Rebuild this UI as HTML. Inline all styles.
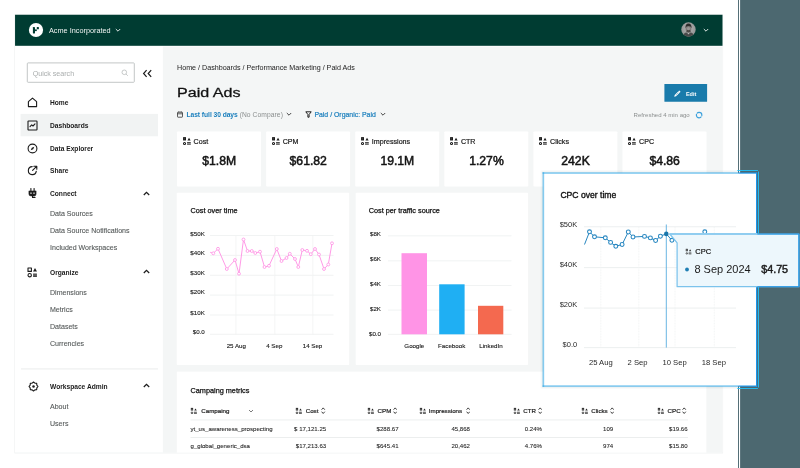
<!DOCTYPE html>
<html>
<head>
<meta charset="utf-8">
<title>Paid Ads</title>
<style>
*{box-sizing:border-box;margin:0;padding:0}
html,body{width:800px;height:468px;overflow:hidden;background:#fff}
body{font-family:"Liberation Sans",sans-serif;color:#1b1b1b;position:relative}
.abs{position:absolute}
.t{position:absolute;white-space:nowrap;line-height:10px;height:10px;font-size:7px}
.b{font-weight:bold}
.card{position:absolute;background:#fff;border-radius:1px}
.nav{font-size:6.65px;font-weight:bold;color:#1b1b1b}
.sub{font-size:7.05px;color:#555959;-webkit-text-stroke:0.1px #555959}
.kl{font-size:7.12px;color:#1b1b1b;-webkit-text-stroke:0.2px #1b1b1b}
.kv{font-size:12.2px;font-weight:normal;-webkit-text-stroke:0.5px #141414;text-align:center;line-height:14px;height:14px;color:#141414}
.ax{font-size:6.2px;color:#1b1b1b;-webkit-text-stroke:0.12px #1b1b1b}
.th{font-size:6.2px;color:#1b1b1b;-webkit-text-stroke:0.2px #1b1b1b}
.td{font-size:6.08px;color:#1f1f1f;-webkit-text-stroke:0.08px #1f1f1f}
.r{text-align:right}
</style>
</head>
<body><div id="root" style="position:absolute;left:0;top:0;width:800px;height:468px;will-change:transform">
<svg class="abs" style="left:0;top:0" width="800" height="468" viewBox="0 0 800 468"><rect x="740.1" y="0" width="59.9" height="468" fill="#4c6870" /><rect x="738.05" y="0" width="0.95" height="468" fill="#4c6870" /><rect x="14.4" y="14.4" width="708.7" height="439.0" fill="#eef1f1" /><rect x="15.05" y="14.75" width="707.45" height="437.85" fill="#fff" /><rect x="162.9" y="46.6" width="559.5" height="406.0" fill="#f4f6f6" /><rect x="15.05" y="14.75" width="707.45" height="31.05" fill="#003c32" /><rect x="27.3" y="62.9" width="107.0" height="19.4" fill="#fff" stroke="#b4b9b9" stroke-width="0.8" rx="0.8"/><rect x="20.6" y="113.9" width="137.4" height="22.4" fill="#f1f3f3" /><rect x="21" y="368.2" width="137" height="1.4" fill="#f0f2f2" /><rect x="664.4" y="84.1" width="42.7" height="17.7" fill="#197bab" rx="0.5"/><rect x="177.0" y="131.4" width="84.0" height="55.2" fill="#fff" rx="0.8"/><rect x="266.1" y="131.4" width="84.0" height="55.2" fill="#fff" rx="0.8"/><rect x="355.2" y="131.4" width="84.0" height="55.2" fill="#fff" rx="0.8"/><rect x="444.3" y="131.4" width="84.0" height="55.2" fill="#fff" rx="0.8"/><rect x="533.4" y="131.4" width="84.0" height="55.2" fill="#fff" rx="0.8"/><rect x="622.5" y="131.4" width="84.0" height="55.2" fill="#fff" rx="0.8"/><rect x="176.75" y="192.8" width="172.45" height="172.3" fill="#fff" rx="0.8"/><rect x="355.7" y="192.8" width="172.4" height="172.3" fill="#fff" rx="0.8"/><rect x="176.8" y="371.6" width="529.6" height="81.0" fill="#fff" /><rect x="190.5" y="419.5" width="497.5" height="0.9" fill="#eaeded" /><rect x="190.5" y="437.1" width="497.5" height="0.9" fill="#eaeded" /></svg>
<svg class="abs" style="left:28px;top:22px" width="16" height="16" viewBox="0 0 16 16">
<circle cx="8" cy="8" r="7.1" fill="#fff"/>
<rect x="4.9" y="5" width="2.1" height="6.4" rx="0.4" fill="#003c32"/>
<rect x="7" y="7.4" width="1.8" height="1.7" fill="#003c32"/>
<rect x="8.8" y="5" width="2.1" height="2.2" rx="0.5" fill="#003c32"/>
</svg>
<div class="t" style="left:49px;top:25.8px;font-size:7.3px;color:#eef3f1">Acme Incorporated</div>
<svg class="abs" style="left:115px;top:28.1px" width="6" height="5" viewBox="0 0 6 5"><path d="M0.8 1 L3 3.2 L5.2 1" fill="none" stroke="#e4ebe9" stroke-width="0.95"/></svg>
<svg class="abs" style="left:681.4px;top:22.3px" width="15" height="15" viewBox="0 0 15 15">
<defs><clipPath id="av"><circle cx="7.5" cy="7.5" r="7.2"/></clipPath>
<radialGradient id="avg" cx="0.5" cy="0.45" r="0.6"><stop offset="0" stop-color="#b5b5b5"/><stop offset="1" stop-color="#8e8e8e"/></radialGradient></defs>
<g clip-path="url(#av)">
<rect width="15" height="15" fill="url(#avg)"/>
<path d="M1.5 15 Q2.5 10.8 5.6 10.6 L7.5 12 L9.4 10.6 Q12.5 10.8 13.5 15 Z" fill="#4a4a4a"/>
<path d="M6.3 10.4 L7.5 12.6 L8.7 10.4 Z" fill="#bdbdbd"/>
<ellipse cx="7.5" cy="6.6" rx="2.9" ry="3.9" fill="#7d7a78"/>
<path d="M4.5 6.2 Q4.2 1.6 7.5 1.6 Q10.8 1.6 10.5 6.2 Q10 3.9 7.5 3.9 Q5 3.9 4.5 6.2Z" fill="#2e2c2b"/>
<ellipse cx="7.5" cy="9.2" rx="1.9" ry="1.4" fill="#4d4946"/>
<ellipse cx="7.5" cy="6.6" rx="1.6" ry="1.6" fill="#9a9694"/>
</g></svg>
<svg class="abs" style="left:702.6px;top:27.9px" width="6" height="5" viewBox="0 0 6 5"><path d="M0.8 1 L3 3.2 L5.2 1" fill="none" stroke="#e4ebe9" stroke-width="0.95"/></svg>
<div class="t" style="left:32.7px;top:68.7px;font-size:7.1px;color:#a9adad">Quick search</div>
<svg class="abs" style="left:121px;top:68.8px" width="8" height="8" viewBox="0 0 8 8"><circle cx="3.3" cy="3.3" r="2.3" fill="none" stroke="#b0b4b4" stroke-width="0.7"/><path d="M5 5 L6.8 6.8" stroke="#b0b4b4" stroke-width="0.7"/></svg>
<svg class="abs" style="left:142px;top:68.5px" width="11" height="9" viewBox="0 0 11 9"><path d="M4.6 1.2 L1.6 4.5 L4.6 7.8 M9.2 1.2 L6.2 4.5 L9.2 7.8" fill="none" stroke="#1b1b1b" stroke-width="1.2"/></svg>
<div class="t nav" style="left:50px;top:98px">Home</div>
<div class="t nav" style="left:50px;top:120.5px">Dashboards</div>
<div class="t nav" style="left:50px;top:143.6px">Data Explorer</div>
<div class="t nav" style="left:50px;top:165.5px">Share</div>
<div class="t nav" style="left:50px;top:188.8px">Connect</div>
<svg class="abs" style="left:142.5px;top:190.60000000000002px" width="7" height="5" viewBox="0 0 7 5"><path d="M0.8 4 L3.5 1.3 L6.2 4" fill="none" stroke="#1b1b1b" stroke-width="1.25"/></svg>
<div class="t sub" style="left:50px;top:208.8px">Data Sources</div>
<div class="t sub" style="left:50px;top:225.8px">Data Source Notifications</div>
<div class="t sub" style="left:50px;top:242.8px">Included Workspaces</div>
<div class="t nav" style="left:50px;top:267.6px">Organize</div>
<svg class="abs" style="left:142.5px;top:269.40000000000003px" width="7" height="5" viewBox="0 0 7 5"><path d="M0.8 4 L3.5 1.3 L6.2 4" fill="none" stroke="#1b1b1b" stroke-width="1.25"/></svg>
<div class="t sub" style="left:50px;top:287.5px">Dimensions</div>
<div class="t sub" style="left:50px;top:304.5px">Metrics</div>
<div class="t sub" style="left:50px;top:321.5px">Datasets</div>
<div class="t sub" style="left:50px;top:339px">Currencies</div>
<div class="t nav" style="left:50px;top:381.5px">Workspace Admin</div>
<svg class="abs" style="left:142.5px;top:383.3px" width="7" height="5" viewBox="0 0 7 5"><path d="M0.8 4 L3.5 1.3 L6.2 4" fill="none" stroke="#1b1b1b" stroke-width="1.25"/></svg>
<div class="t sub" style="left:50px;top:401.5px">About</div>
<div class="t sub" style="left:50px;top:418.5px">Users</div>
<svg class="abs" style="left:26.5px;top:97px" width="11" height="11" viewBox="0 0 11 11"><path d="M1.4 4.6 L5.5 1.1 L9.6 4.6 L9.6 9.6 L1.4 9.6 Z" fill="none" stroke="#1b1b1b" stroke-width="1.1" stroke-linejoin="round" stroke-linecap="round"/></svg>
<svg class="abs" style="left:26.5px;top:120px" width="11" height="11" viewBox="0 0 11 11"><rect x="1" y="1" width="9" height="9" rx="0.6" fill="none" stroke="#1b1b1b" stroke-width="1.1" stroke-linejoin="round" stroke-linecap="round"/><path d="M3 6.7 L4.7 4.9 L6 6 L8 3.9" fill="none" stroke="#1b1b1b" stroke-width="1.1" stroke-linejoin="round" stroke-linecap="round" /></svg>
<svg class="abs" style="left:26.5px;top:142.5px" width="11" height="11" viewBox="0 0 11 11"><circle cx="5.5" cy="5.5" r="4.4" fill="none" stroke="#1b1b1b" stroke-width="1.1" stroke-linejoin="round" stroke-linecap="round"/><path d="M7.3 3.7 L6.2 6.2 L3.7 7.3 L4.8 4.8 Z" fill="#1b1b1b"/></svg>
<svg class="abs" style="left:26.5px;top:165px" width="11" height="11" viewBox="0 0 11 11"><path d="M5.2 1.6 A4 4 0 1 0 9.3 6.2" fill="none" stroke="#1b1b1b" stroke-width="1.1" stroke-linejoin="round" stroke-linecap="round"/><path d="M5.6 5.4 L9.6 1.4 M6.8 1.2 L9.8 1.2 L9.8 4.2" fill="none" stroke="#1b1b1b" stroke-width="1.1" stroke-linejoin="round" stroke-linecap="round"/></svg>
<svg class="abs" style="left:27.4px;top:187.5px" width="11" height="12" viewBox="0 0 11 12"><path d="M3.9 0.5 V2.8 M7.1 0.5 V2.8" fill="none" stroke="#1b1b1b" stroke-width="1.1" stroke-linejoin="round" stroke-linecap="round"/><path d="M1.9 2.9 H9.1 V6 Q9.1 7.9 7.2 7.9 H3.8 Q1.9 7.9 1.9 6 Z" fill="#1b1b1b" stroke="#1b1b1b" stroke-width="0.5"/><rect x="3.1" y="4.5" width="1.8" height="1.2" rx="0.4" fill="#ddd"/><rect x="6.1" y="4.5" width="1.8" height="1.2" rx="0.4" fill="#ddd"/><path d="M5.5 8 V9.4 H8" fill="none" stroke="#1b1b1b" stroke-width="1.1" stroke-linejoin="round" stroke-linecap="round"/></svg>
<svg class="abs" style="left:27.1px;top:267.2px" width="11" height="11" viewBox="0 0 11 11"><rect x="1" y="1" width="3.4" height="3.4" fill="none" stroke="#1b1b1b" stroke-width="1.1" stroke-linejoin="round" stroke-linecap="round"/><path d="M8 1 L10 4.4 L6 4.4 Z" fill="#1b1b1b"/><circle cx="2.7" cy="8.2" r="1.7" fill="none" stroke="#1b1b1b" stroke-width="1.1" stroke-linejoin="round" stroke-linecap="round"/><rect x="6.1" y="6.6" width="3.8" height="3.3" fill="#1b1b1b"/><path d="M6.1 7.7 H9.9 M6.1 8.8 H9.9" stroke="#fff" stroke-width="0.35"/></svg>
<svg class="abs" style="left:27.6px;top:380.8px" width="11" height="11" viewBox="0 0 11 11"><path d="M5.50 1.00 L6.88 2.17 L8.68 2.32 L8.83 4.12 L10.00 5.50 L8.83 6.88 L8.68 8.68 L6.88 8.83 L5.50 10.00 L4.12 8.83 L2.32 8.68 L2.17 6.88 L1.00 5.50 L2.17 4.12 L2.32 2.32 L4.12 2.17 Z" fill="none" stroke="#1b1b1b" stroke-width="1.1" stroke-linejoin="round" stroke-linecap="round"/><circle cx="5.5" cy="5.5" r="1.25" fill="#1b1b1b"/></svg>
<div class="t" style="left:177px;top:62.5px;font-size:7.15px;color:#222">Home / Dashboards / Performance Marketing / Paid Ads</div>
<div class="t" style="left:176.8px;top:82.8px;font-size:13.7px;line-height:20px;height:20px;color:#111;-webkit-text-stroke:0.3px #111;transform:scaleX(1.175);transform-origin:0 50%">Paid Ads</div>
<svg class="abs" style="left:177px;top:111px" width="6" height="7" viewBox="0 0 6 7"><rect x="0.5" y="1.2" width="5" height="5" rx="0.5" fill="none" stroke="#333" stroke-width="0.8"/><path d="M0.5 2.8 H5.5" stroke="#333" stroke-width="0.8"/><path d="M1.8 0.3 V1.6 M4.2 0.3 V1.6" stroke="#333" stroke-width="0.7"/></svg>
<div class="t" style="left:186.5px;top:110px;font-size:6.7px"><span style="color:#1a7fbd;font-weight:bold;letter-spacing:-0.05px">Last full 30 days</span><span style="color:#8a8e8e;letter-spacing:0.08px"> (No Compare)</span></div>
<svg class="abs" style="left:285.5px;top:112.3px" width="6" height="5" viewBox="0 0 6 5"><path d="M0.8 1 L3 3.2 L5.2 1" fill="none" stroke="#333" stroke-width="0.9"/></svg>
<svg class="abs" style="left:304.5px;top:111px" width="7" height="7" viewBox="0 0 7 7"><path d="M0.8 0.8 H6.2 L4.1 3.5 V6.2 H2.9 V3.5 Z" fill="none" stroke="#222" stroke-width="1" stroke-linejoin="round"/></svg>
<div class="t" style="left:314.4px;top:110px;font-size:6.92px;color:#1a7fbd;-webkit-text-stroke:0.2px #1a7fbd">Paid / Organic: Paid</div>
<svg class="abs" style="left:380.3px;top:112.3px" width="6" height="5" viewBox="0 0 6 5"><path d="M0.8 1 L3 3.2 L5.2 1" fill="none" stroke="#333" stroke-width="0.9"/></svg>
<svg class="abs" style="left:673px;top:89px" width="9" height="9" viewBox="0 0 9 9"><path d="M1.2 7.8 L1.7 5.9 L6.2 1.4 L7.6 2.8 L3.1 7.3 Z" fill="#fff"/><path d="M5.2 2.5 L6.5 3.8 M3.9 3.8 L5.2 5.1 M2.7 5 L4 6.3" stroke="#197bab" stroke-width="0.45"/></svg>
<div class="t b" style="left:685.9px;top:89px;font-size:5.5px;color:#fff">Edit</div>
<div class="t" style="left:633.6px;top:110px;font-size:6.05px;color:#8b8f8f">Refreshed 4 min ago</div>
<svg class="abs" style="left:694.5px;top:110.5px" width="8" height="8" viewBox="0 0 8 8"><circle cx="4.1" cy="4.1" r="2.75" fill="none" stroke="#3aa0dc" stroke-width="1.15" stroke-dasharray="8.04 0.6" stroke-dashoffset="-1.5"/></svg>
<svg class="abs" style="left:181.5px;top:135.8px" width="9.9" height="9.9" viewBox="0 0 9 9"><rect x="1.45" y="1.5" width="1.7" height="2.1" fill="none" stroke="#1b1b1b" stroke-width="0.95"/><path d="M6.4 1.7 L7.85 4.1 L4.95 4.1 Z" fill="#1b1b1b"/><circle cx="2.3" cy="6.8" r="0.95" fill="none" stroke="#1b1b1b" stroke-width="0.95"/><path d="M4.6 6.1 H8 M4.6 7.4 H8" stroke="#1b1b1b" stroke-width="0.9"/></svg>
<div class="t kl" style="left:193.6px;top:137px">Cost</div>
<div class="t kv" style="left:177.0px;width:84.3px;top:154px">$1.8M</div>
<svg class="abs" style="left:270.6px;top:135.8px" width="9.9" height="9.9" viewBox="0 0 9 9"><rect x="1.45" y="1.5" width="1.7" height="2.1" fill="none" stroke="#1b1b1b" stroke-width="0.95"/><path d="M6.4 1.7 L7.85 4.1 L4.95 4.1 Z" fill="#1b1b1b"/><circle cx="2.3" cy="6.8" r="0.95" fill="none" stroke="#1b1b1b" stroke-width="0.95"/><path d="M4.6 6.1 H8 M4.6 7.4 H8" stroke="#1b1b1b" stroke-width="0.9"/></svg>
<div class="t kl" style="left:282.70000000000005px;top:137px">CPM</div>
<div class="t kv" style="left:266.1px;width:84.3px;top:154px">$61.82</div>
<svg class="abs" style="left:359.7px;top:135.8px" width="9.9" height="9.9" viewBox="0 0 9 9"><rect x="1.45" y="1.5" width="1.7" height="2.1" fill="none" stroke="#1b1b1b" stroke-width="0.95"/><path d="M6.4 1.7 L7.85 4.1 L4.95 4.1 Z" fill="#1b1b1b"/><circle cx="2.3" cy="6.8" r="0.95" fill="none" stroke="#1b1b1b" stroke-width="0.95"/><path d="M4.6 6.1 H8 M4.6 7.4 H8" stroke="#1b1b1b" stroke-width="0.9"/></svg>
<div class="t kl" style="left:371.8px;top:137px">Impressions</div>
<div class="t kv" style="left:355.2px;width:84.3px;top:154px">19.1M</div>
<svg class="abs" style="left:448.8px;top:135.8px" width="9.9" height="9.9" viewBox="0 0 9 9"><rect x="1.45" y="1.5" width="1.7" height="2.1" fill="none" stroke="#1b1b1b" stroke-width="0.95"/><path d="M6.4 1.7 L7.85 4.1 L4.95 4.1 Z" fill="#1b1b1b"/><circle cx="2.3" cy="6.8" r="0.95" fill="none" stroke="#1b1b1b" stroke-width="0.95"/><path d="M4.6 6.1 H8 M4.6 7.4 H8" stroke="#1b1b1b" stroke-width="0.9"/></svg>
<div class="t kl" style="left:460.90000000000003px;top:137px">CTR</div>
<div class="t kv" style="left:444.3px;width:84.3px;top:154px">1.27%</div>
<svg class="abs" style="left:537.9px;top:135.8px" width="9.9" height="9.9" viewBox="0 0 9 9"><rect x="1.45" y="1.5" width="1.7" height="2.1" fill="none" stroke="#1b1b1b" stroke-width="0.95"/><path d="M6.4 1.7 L7.85 4.1 L4.95 4.1 Z" fill="#1b1b1b"/><circle cx="2.3" cy="6.8" r="0.95" fill="none" stroke="#1b1b1b" stroke-width="0.95"/><path d="M4.6 6.1 H8 M4.6 7.4 H8" stroke="#1b1b1b" stroke-width="0.9"/></svg>
<div class="t kl" style="left:550.0px;top:137px">Clicks</div>
<div class="t kv" style="left:533.4px;width:84.3px;top:154px">242K</div>
<svg class="abs" style="left:627.0px;top:135.8px" width="9.9" height="9.9" viewBox="0 0 9 9"><rect x="1.45" y="1.5" width="1.7" height="2.1" fill="none" stroke="#1b1b1b" stroke-width="0.95"/><path d="M6.4 1.7 L7.85 4.1 L4.95 4.1 Z" fill="#1b1b1b"/><circle cx="2.3" cy="6.8" r="0.95" fill="none" stroke="#1b1b1b" stroke-width="0.95"/><path d="M4.6 6.1 H8 M4.6 7.4 H8" stroke="#1b1b1b" stroke-width="0.9"/></svg>
<div class="t kl" style="left:639.1px;top:137px">CPC</div>
<div class="t kv" style="left:622.5px;width:84.3px;top:154px">$4.86</div>
<div class="t" style="left:190.5px;top:205.5px;font-size:7.3px;color:#111;-webkit-text-stroke:0.25px #111">Cost over time</div>
<div class="t" style="left:368.7px;top:205.5px;font-size:7.3px;color:#111;-webkit-text-stroke:0.25px #111">Cost per traffic source</div>
<svg class="abs" style="left:177px;top:192px" width="173" height="173" viewBox="177 192 173 173"><path d="M210 235.5 H333.5" stroke="#edf0f0" stroke-width="0.8"/><path d="M210 255.4 H333.5" stroke="#edf0f0" stroke-width="0.8"/><path d="M210 275.3 H333.5" stroke="#edf0f0" stroke-width="0.8"/><path d="M210 295.1 H333.5" stroke="#edf0f0" stroke-width="0.8"/><path d="M210 315 H333.5" stroke="#edf0f0" stroke-width="0.8"/><path d="M210 334.3 H333.5" stroke="#edf0f0" stroke-width="0.8"/><path d="M235.9 235.5 V334.3" stroke="#f1f3f3" stroke-width="0.8"/><path d="M274.8 235.5 V334.3" stroke="#f1f3f3" stroke-width="0.8"/><path d="M312.8 235.5 V334.3" stroke="#f1f3f3" stroke-width="0.8"/><polyline fill="none" stroke="#ff8fe3" stroke-width="0.9" stroke-linejoin="round" points="210.2,252.3 211.3,252.6 213.3,253.3 218,248.8 226.8,269 235,260 239,273.7 243.5,239.5 247.5,251 251.8,251 255.3,253 260,251.7 264.5,267 269,265.8 276.8,249 281.5,261 286.5,258 289.8,253.8 295,259 298.3,267 302.3,250 307,250.8 310.8,254.2 315,249 319,254.5 324,269 328.3,264.5 332,243.3"/><circle cx="213.3" cy="253.3" r="1.45" fill="#fff" stroke="#ff8fe3" stroke-width="0.8"/><circle cx="218" cy="248.8" r="1.45" fill="#fff" stroke="#ff8fe3" stroke-width="0.8"/><circle cx="226.8" cy="269" r="1.45" fill="#fff" stroke="#ff8fe3" stroke-width="0.8"/><circle cx="235" cy="260" r="1.45" fill="#fff" stroke="#ff8fe3" stroke-width="0.8"/><circle cx="239" cy="273.7" r="1.45" fill="#fff" stroke="#ff8fe3" stroke-width="0.8"/><circle cx="243.5" cy="239.5" r="1.45" fill="#fff" stroke="#ff8fe3" stroke-width="0.8"/><circle cx="247.5" cy="251" r="1.45" fill="#fff" stroke="#ff8fe3" stroke-width="0.8"/><circle cx="251.8" cy="251" r="1.45" fill="#fff" stroke="#ff8fe3" stroke-width="0.8"/><circle cx="255.3" cy="253" r="1.45" fill="#fff" stroke="#ff8fe3" stroke-width="0.8"/><circle cx="260" cy="251.7" r="1.45" fill="#fff" stroke="#ff8fe3" stroke-width="0.8"/><circle cx="264.5" cy="267" r="1.45" fill="#fff" stroke="#ff8fe3" stroke-width="0.8"/><circle cx="269" cy="265.8" r="1.45" fill="#fff" stroke="#ff8fe3" stroke-width="0.8"/><circle cx="276.8" cy="249" r="1.45" fill="#fff" stroke="#ff8fe3" stroke-width="0.8"/><circle cx="281.5" cy="261" r="1.45" fill="#fff" stroke="#ff8fe3" stroke-width="0.8"/><circle cx="286.5" cy="258" r="1.45" fill="#fff" stroke="#ff8fe3" stroke-width="0.8"/><circle cx="289.8" cy="253.8" r="1.45" fill="#fff" stroke="#ff8fe3" stroke-width="0.8"/><circle cx="295" cy="259" r="1.45" fill="#fff" stroke="#ff8fe3" stroke-width="0.8"/><circle cx="298.3" cy="267" r="1.45" fill="#fff" stroke="#ff8fe3" stroke-width="0.8"/><circle cx="302.3" cy="250" r="1.45" fill="#fff" stroke="#ff8fe3" stroke-width="0.8"/><circle cx="307" cy="250.8" r="1.45" fill="#fff" stroke="#ff8fe3" stroke-width="0.8"/><circle cx="310.8" cy="254.2" r="1.45" fill="#fff" stroke="#ff8fe3" stroke-width="0.8"/><circle cx="315" cy="249" r="1.45" fill="#fff" stroke="#ff8fe3" stroke-width="0.8"/><circle cx="319" cy="254.5" r="1.45" fill="#fff" stroke="#ff8fe3" stroke-width="0.8"/><circle cx="324" cy="269" r="1.45" fill="#fff" stroke="#ff8fe3" stroke-width="0.8"/><circle cx="328.3" cy="264.5" r="1.45" fill="#fff" stroke="#ff8fe3" stroke-width="0.8"/><circle cx="332" cy="243.3" r="1.45" fill="#fff" stroke="#ff8fe3" stroke-width="0.8"/></svg>
<div class="t ax r" style="left:180px;width:24.8px;top:229px">$50K</div>
<div class="t ax r" style="left:180px;width:24.8px;top:248px">$40K</div>
<div class="t ax r" style="left:180px;width:24.8px;top:268px">$30K</div>
<div class="t ax r" style="left:180px;width:24.8px;top:287px">$20K</div>
<div class="t ax r" style="left:180px;width:24.8px;top:308px">$10K</div>
<div class="t ax r" style="left:180px;width:24.8px;top:327px">$0.0</div>
<div class="t ax" style="left:216.3px;width:40px;text-align:center;top:341.3px">25 Aug</div>
<div class="t ax" style="left:254.3px;width:40px;text-align:center;top:341.3px">4 Sep</div>
<div class="t ax" style="left:292.5px;width:40px;text-align:center;top:341.3px">14 Sep</div>
<svg class="abs" style="left:355px;top:192px" width="174" height="173" viewBox="355 192 174 173"><path d="M388 235.8 H511.5" stroke="#edf0f0" stroke-width="0.8"/><path d="M388 260.8 H511.5" stroke="#edf0f0" stroke-width="0.8"/><path d="M388 285.5 H511.5" stroke="#edf0f0" stroke-width="0.8"/><path d="M388 310.1 H511.5" stroke="#edf0f0" stroke-width="0.8"/><path d="M388 334.4 H511.5" stroke="#edf0f0" stroke-width="0.8"/><rect x="401.5" y="253.2" width="25.5" height="81.1" fill="#ff94e6"/><rect x="439.2" y="284.3" width="25.4" height="50" fill="#1faff3"/><rect x="478" y="305.8" width="25.3" height="28.5" fill="#f4694f"/></svg>
<div class="t ax r" style="left:360px;width:21px;top:229px">$8K</div>
<div class="t ax r" style="left:360px;width:21px;top:254px">$6K</div>
<div class="t ax r" style="left:360px;width:21px;top:279px">$4K</div>
<div class="t ax r" style="left:360px;width:21px;top:304px">$2K</div>
<div class="t ax r" style="left:360px;width:21px;top:329px">$0.0</div>
<div class="t ax" style="left:394.3px;width:40px;text-align:center;top:341.3px">Google</div>
<div class="t ax" style="left:431.7px;width:40px;text-align:center;top:341.3px">Facebook</div>
<div class="t ax" style="left:471px;width:40px;text-align:center;top:341.3px">LinkedIn</div>
<div class="t" style="left:190.5px;top:385.8px;font-size:7.3px;color:#111;-webkit-text-stroke:0.25px #111">Campaing metrics</div>
<svg class="abs" style="left:190.39999999999998px;top:407px" width="7.74" height="7.74" viewBox="0 0 9 9"><rect x="1.45" y="1.5" width="1.7" height="2.1" fill="none" stroke="#222" stroke-width="0.95"/><path d="M6.4 1.7 L7.85 4.1 L4.95 4.1 Z" fill="#222"/><circle cx="2.3" cy="6.8" r="0.95" fill="none" stroke="#222" stroke-width="0.95"/><path d="M4.6 6.1 H8 M4.6 7.4 H8" stroke="#222" stroke-width="0.9"/></svg>
<div class="t th" style="left:201.3px;top:405.6px">Campaing</div>
<svg class="abs" style="left:248.3px;top:408.5px" width="6" height="5" viewBox="0 0 6 5"><path d="M1 1 L3 3 L5 1" fill="none" stroke="#444" stroke-width="0.7"/></svg>
<svg class="abs" style="left:295.4px;top:407px" width="7.74" height="7.74" viewBox="0 0 9 9"><rect x="1.45" y="1.5" width="1.7" height="2.1" fill="none" stroke="#222" stroke-width="0.95"/><path d="M6.4 1.7 L7.85 4.1 L4.95 4.1 Z" fill="#222"/><circle cx="2.3" cy="6.8" r="0.95" fill="none" stroke="#222" stroke-width="0.95"/><path d="M4.6 6.1 H8 M4.6 7.4 H8" stroke="#222" stroke-width="0.9"/></svg>
<div class="t th" style="left:305.7px;top:405.6px">Cost</div>
<svg class="abs" style="left:321.3px;top:407px" width="4.4" height="7.4" viewBox="0 0 4.4 7.4"><path d="M0.6 2.7 L2.2 0.9 L3.8 2.7 M0.6 4.7 L2.2 6.5 L3.8 4.7" fill="none" stroke="#1b1b1b" stroke-width="0.85"/></svg>
<svg class="abs" style="left:367.09999999999997px;top:407px" width="7.74" height="7.74" viewBox="0 0 9 9"><rect x="1.45" y="1.5" width="1.7" height="2.1" fill="none" stroke="#222" stroke-width="0.95"/><path d="M6.4 1.7 L7.85 4.1 L4.95 4.1 Z" fill="#222"/><circle cx="2.3" cy="6.8" r="0.95" fill="none" stroke="#222" stroke-width="0.95"/><path d="M4.6 6.1 H8 M4.6 7.4 H8" stroke="#222" stroke-width="0.9"/></svg>
<div class="t th" style="left:377.6px;top:405.6px">CPM</div>
<svg class="abs" style="left:393px;top:407px" width="4.4" height="7.4" viewBox="0 0 4.4 7.4"><path d="M0.6 2.7 L2.2 0.9 L3.8 2.7 M0.6 4.7 L2.2 6.5 L3.8 4.7" fill="none" stroke="#1b1b1b" stroke-width="0.85"/></svg>
<svg class="abs" style="left:418.5px;top:407px" width="7.74" height="7.74" viewBox="0 0 9 9"><rect x="1.45" y="1.5" width="1.7" height="2.1" fill="none" stroke="#222" stroke-width="0.95"/><path d="M6.4 1.7 L7.85 4.1 L4.95 4.1 Z" fill="#222"/><circle cx="2.3" cy="6.8" r="0.95" fill="none" stroke="#222" stroke-width="0.95"/><path d="M4.6 6.1 H8 M4.6 7.4 H8" stroke="#222" stroke-width="0.9"/></svg>
<div class="t th" style="left:428.8px;top:405.6px">Impressions</div>
<svg class="abs" style="left:465.5px;top:407px" width="4.4" height="7.4" viewBox="0 0 4.4 7.4"><path d="M0.6 2.7 L2.2 0.9 L3.8 2.7 M0.6 4.7 L2.2 6.5 L3.8 4.7" fill="none" stroke="#1b1b1b" stroke-width="0.85"/></svg>
<svg class="abs" style="left:512.7px;top:407px" width="7.74" height="7.74" viewBox="0 0 9 9"><rect x="1.45" y="1.5" width="1.7" height="2.1" fill="none" stroke="#222" stroke-width="0.95"/><path d="M6.4 1.7 L7.85 4.1 L4.95 4.1 Z" fill="#222"/><circle cx="2.3" cy="6.8" r="0.95" fill="none" stroke="#222" stroke-width="0.95"/><path d="M4.6 6.1 H8 M4.6 7.4 H8" stroke="#222" stroke-width="0.9"/></svg>
<div class="t th" style="left:523.2px;top:405.6px">CTR</div>
<svg class="abs" style="left:538px;top:407px" width="4.4" height="7.4" viewBox="0 0 4.4 7.4"><path d="M0.6 2.7 L2.2 0.9 L3.8 2.7 M0.6 4.7 L2.2 6.5 L3.8 4.7" fill="none" stroke="#1b1b1b" stroke-width="0.85"/></svg>
<svg class="abs" style="left:581.0px;top:407px" width="7.74" height="7.74" viewBox="0 0 9 9"><rect x="1.45" y="1.5" width="1.7" height="2.1" fill="none" stroke="#222" stroke-width="0.95"/><path d="M6.4 1.7 L7.85 4.1 L4.95 4.1 Z" fill="#222"/><circle cx="2.3" cy="6.8" r="0.95" fill="none" stroke="#222" stroke-width="0.95"/><path d="M4.6 6.1 H8 M4.6 7.4 H8" stroke="#222" stroke-width="0.9"/></svg>
<div class="t th" style="left:591.2px;top:405.6px">Clicks</div>
<svg class="abs" style="left:610px;top:407px" width="4.4" height="7.4" viewBox="0 0 4.4 7.4"><path d="M0.6 2.7 L2.2 0.9 L3.8 2.7 M0.6 4.7 L2.2 6.5 L3.8 4.7" fill="none" stroke="#1b1b1b" stroke-width="0.85"/></svg>
<svg class="abs" style="left:657.2px;top:407px" width="7.74" height="7.74" viewBox="0 0 9 9"><rect x="1.45" y="1.5" width="1.7" height="2.1" fill="none" stroke="#222" stroke-width="0.95"/><path d="M6.4 1.7 L7.85 4.1 L4.95 4.1 Z" fill="#222"/><circle cx="2.3" cy="6.8" r="0.95" fill="none" stroke="#222" stroke-width="0.95"/><path d="M4.6 6.1 H8 M4.6 7.4 H8" stroke="#222" stroke-width="0.9"/></svg>
<div class="t th" style="left:667.6px;top:405.6px">CPC</div>
<svg class="abs" style="left:682.2px;top:407px" width="4.4" height="7.4" viewBox="0 0 4.4 7.4"><path d="M0.6 2.7 L2.2 0.9 L3.8 2.7 M0.6 4.7 L2.2 6.5 L3.8 4.7" fill="none" stroke="#1b1b1b" stroke-width="0.85"/></svg>
<div class="t td" style="left:190.5px;top:423.9px">yt_us_awareness_prospecting</div>
<div class="t td r" style="left:266.2px;width:60px;top:423.9px">$ 17,121.25</div>
<div class="t td r" style="left:338.6px;width:60px;top:423.9px">$288.67</div>
<div class="t td r" style="left:410px;width:60px;top:423.9px">45,868</div>
<div class="t td r" style="left:482px;width:60px;top:423.9px">0.24%</div>
<div class="t td r" style="left:553.2px;width:60px;top:423.9px">109</div>
<div class="t td r" style="left:627.6px;width:60px;top:423.9px">$19.66</div>
<div class="t td" style="left:190.5px;top:440.8px">g_global_generic_dsa</div>
<div class="t td r" style="left:266.2px;width:60px;top:440.8px">$17,213.63</div>
<div class="t td r" style="left:338.6px;width:60px;top:440.8px">$645.41</div>
<div class="t td r" style="left:410px;width:60px;top:440.8px">20,462</div>
<div class="t td r" style="left:482px;width:60px;top:440.8px">4.76%</div>
<div class="t td r" style="left:553.2px;width:60px;top:440.8px">974</div>
<div class="t td r" style="left:627.6px;width:60px;top:440.8px">$15.80</div>
<svg class="abs" style="left:0;top:0" width="800" height="468" viewBox="0 0 800 468"><rect x="540.35" y="170.05" width="219.25" height="219.05" fill="rgba(70,100,120,0.035)" rx="2"/><rect x="541.55" y="171.25" width="216.85" height="216.65" fill="rgba(70,100,120,0.05)" rx="1"/><rect x="543.35" y="173.05" width="213.25" height="213.05" fill="#fff" /><rect x="542.525" y="172.225" width="1.65" height="214.7" fill="rgba(42,165,230,0.56)" /><rect x="542.525" y="172.225" width="195.775" height="1.65" fill="rgba(42,165,230,0.56)" /><rect x="542.525" y="385.275" width="195.775" height="1.65" fill="rgba(42,165,230,0.56)" /><rect x="738.3" y="172.45" width="18.9" height="1.2" fill="#1b96ec" /><rect x="738.3" y="385.5" width="18.9" height="1.2" fill="#1b96ec" /><rect x="756.0" y="172.45" width="1.2" height="214.25" fill="#1b96ec" /><rect x="737.3" y="170.05" width="20.6" height="0.9" fill="#22c3fb" /><rect x="737.3" y="388.05" width="20.6" height="0.9" fill="#22c3fb" /><rect x="758.05" y="171.5" width="0.9" height="216.0" fill="#22c3fb" /></svg>
<div class="t" style="left:560.4px;top:189.3px;font-size:8.6px;line-height:12px;height:12px;color:#111;-webkit-text-stroke:0.35px #111">CPC over time</div>
<svg class="abs" style="left:544px;top:173px" width="256" height="213" viewBox="544 173 256 213"><path d="M584 226.8 H736" stroke="#eaedee" stroke-width="0.9"/><path d="M584 267.6 H736" stroke="#eaedee" stroke-width="0.9"/><path d="M584 308.1 H736" stroke="#eaedee" stroke-width="0.9"/><path d="M584 347.6 H736" stroke="#eaedee" stroke-width="0.9"/><path d="M600.8 227 V347.6" stroke="#f0f2f3" stroke-width="0.8" stroke-dasharray="1 0.6"/><path d="M638.8 227 V347.6" stroke="#f0f2f3" stroke-width="0.8" stroke-dasharray="1 0.6"/><path d="M675 227 V347.6" stroke="#f0f2f3" stroke-width="0.8" stroke-dasharray="1 0.6"/><path d="M714.3 227 V347.6" stroke="#f0f2f3" stroke-width="0.8" stroke-dasharray="1 0.6"/><path d="M666.3 224.5 V347.6" stroke="#58aee0" stroke-width="0.9"/><polyline fill="none" stroke="#2686c0" stroke-width="1" stroke-linejoin="round" points="584.5,244.5 589.5,231.8 594.5,236.8 605.3,237.8 610.6,242.4 615.8,246.3 622.1,244.5 628.3,232 633,237 644.5,236.4 650.4,237.9 655.6,240.5 660.4,236.2 666.3,233.9 671.9,240.3 677,239 683.2,235.7 690,239 697,240 704.8,231.8 710,238 715.8,235.6 722,239 729,239 735,240"/><circle cx="589.5" cy="231.8" r="1.95" fill="#fff" stroke="#2686c0" stroke-width="1.05"/><circle cx="594.5" cy="236.8" r="1.95" fill="#fff" stroke="#2686c0" stroke-width="1.05"/><circle cx="605.3" cy="237.8" r="1.95" fill="#fff" stroke="#2686c0" stroke-width="1.05"/><circle cx="610.6" cy="242.4" r="1.95" fill="#fff" stroke="#2686c0" stroke-width="1.05"/><circle cx="615.8" cy="246.3" r="1.95" fill="#fff" stroke="#2686c0" stroke-width="1.05"/><circle cx="622.1" cy="244.5" r="1.95" fill="#fff" stroke="#2686c0" stroke-width="1.05"/><circle cx="628.3" cy="232" r="1.95" fill="#fff" stroke="#2686c0" stroke-width="1.05"/><circle cx="633" cy="237" r="1.95" fill="#fff" stroke="#2686c0" stroke-width="1.05"/><circle cx="644.5" cy="236.4" r="1.95" fill="#fff" stroke="#2686c0" stroke-width="1.05"/><circle cx="650.4" cy="237.9" r="1.95" fill="#fff" stroke="#2686c0" stroke-width="1.05"/><circle cx="655.6" cy="240.5" r="1.95" fill="#fff" stroke="#2686c0" stroke-width="1.05"/><circle cx="660.4" cy="236.2" r="1.95" fill="#fff" stroke="#2686c0" stroke-width="1.05"/><circle cx="666.3" cy="233.9" r="2.3" fill="#1a76ab"/><circle cx="671.9" cy="240.3" r="1.95" fill="#fff" stroke="#2686c0" stroke-width="1.05"/><circle cx="677" cy="239" r="1.95" fill="#fff" stroke="#2686c0" stroke-width="1.05"/><circle cx="683.2" cy="235.7" r="1.95" fill="#fff" stroke="#2686c0" stroke-width="1.05"/><circle cx="690" cy="239" r="1.95" fill="#fff" stroke="#2686c0" stroke-width="1.05"/><circle cx="697" cy="240" r="1.95" fill="#fff" stroke="#2686c0" stroke-width="1.05"/><circle cx="704.8" cy="231.8" r="1.95" fill="#fff" stroke="#2686c0" stroke-width="1.05"/><circle cx="710" cy="238" r="1.95" fill="#fff" stroke="#2686c0" stroke-width="1.05"/><circle cx="715.8" cy="235.6" r="1.95" fill="#fff" stroke="#2686c0" stroke-width="1.05"/><circle cx="722" cy="239" r="1.95" fill="#fff" stroke="#2686c0" stroke-width="1.05"/><circle cx="729" cy="239" r="1.95" fill="#fff" stroke="#2686c0" stroke-width="1.05"/><circle cx="735" cy="240" r="1.95" fill="#fff" stroke="#2686c0" stroke-width="1.05"/><path d="M669.8 234 H798.9 V286.7 H677.1 V242.8 Z" fill="#edf7fc" stroke="#7cc3ec" stroke-width="1.25" stroke-linejoin="round"/><path d="M669.5 233.95 H757.4" stroke="#8fcdf0" stroke-width="1.8"/><path d="M757.4 234 H798.9 V286.7 H757.4" fill="none" stroke="#2396e6" stroke-width="1.1"/><circle cx="687" cy="269.5" r="1.9" fill="#1f7fb4"/></svg>
<div class="t r" style="left:550px;width:27.2px;top:219.0px;font-size:7.5px;color:#2a2a2a;line-height:12px;height:12px">$50K</div>
<div class="t r" style="left:550px;width:27.2px;top:259.0px;font-size:7.5px;color:#2a2a2a;line-height:12px;height:12px">$40K</div>
<div class="t r" style="left:550px;width:27.2px;top:299.1px;font-size:7.5px;color:#2a2a2a;line-height:12px;height:12px">$20K</div>
<div class="t r" style="left:550px;width:27.2px;top:339.1px;font-size:7.5px;color:#2a2a2a;line-height:12px;height:12px">$0.0</div>
<div class="t" style="left:580.8px;width:40px;text-align:center;top:357px;font-size:7.65px;color:#2a2a2a;line-height:12px;height:12px">25 Aug</div>
<div class="t" style="left:617.6px;width:40px;text-align:center;top:357px;font-size:7.65px;color:#2a2a2a;line-height:12px;height:12px">2 Sep</div>
<div class="t" style="left:654.6px;width:40px;text-align:center;top:357px;font-size:7.65px;color:#2a2a2a;line-height:12px;height:12px">10 Sep</div>
<div class="t" style="left:693.8px;width:40px;text-align:center;top:357px;font-size:7.65px;color:#2a2a2a;line-height:12px;height:12px">18 Sep</div>
<svg class="abs" style="left:684.6px;top:247.6px" width="7.2" height="7.2" viewBox="0 0 9 9"><rect x="1.45" y="1.5" width="1.7" height="2.1" fill="none" stroke="#2a2a2a" stroke-width="0.95"/><path d="M6.4 1.7 L7.85 4.1 L4.95 4.1 Z" fill="#2a2a2a"/><circle cx="2.3" cy="6.8" r="0.95" fill="none" stroke="#2a2a2a" stroke-width="0.95"/><path d="M4.6 6.1 H8 M4.6 7.4 H8" stroke="#2a2a2a" stroke-width="0.9"/></svg>
<div class="t" style="left:695.3px;top:246px;font-size:7.5px;line-height:12px;height:12px;color:#111;-webkit-text-stroke:0.2px #111">CPC</div>
<div class="t" style="left:694.4px;top:262.3px;font-size:11px;line-height:14px;height:14px;color:#1b1b1b">8 Sep 2024</div>
<div class="t" style="left:761.2px;top:262.3px;font-size:10.75px;line-height:14px;height:14px;color:#1b1b1b;-webkit-text-stroke:0.45px #1b1b1b">$4.75</div>
</body>
</html>
